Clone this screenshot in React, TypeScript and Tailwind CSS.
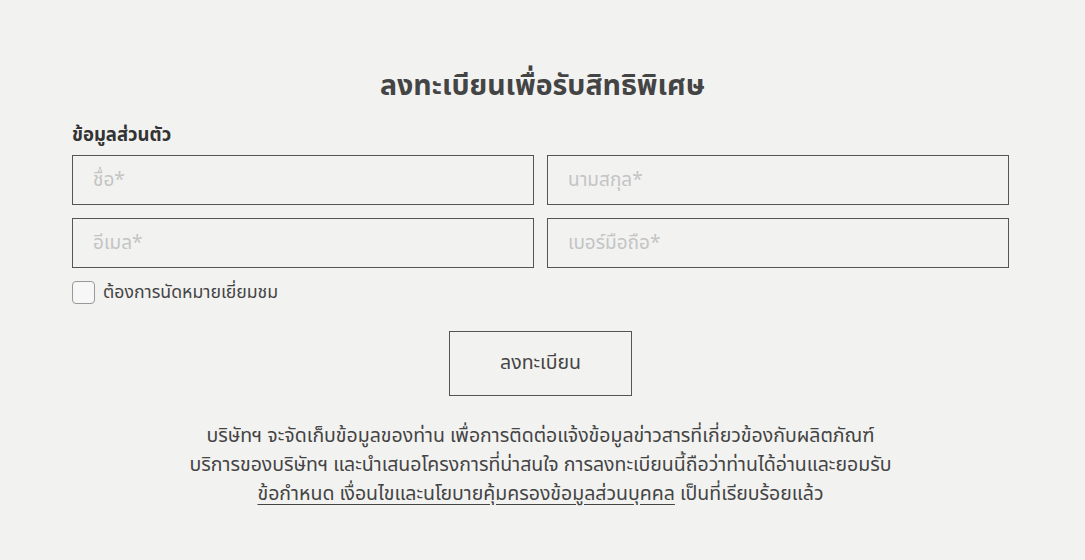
import { useState } from "react";

// ฟอร์มลงทะเบียนรับสิทธิพิเศษ
const FONT = "font-['Noto_Sans_Thai','Noto_Sans','Liberation_Sans',sans-serif]";

function Field({ placeholder }: { placeholder: string }) {
  return (
    <input
      type="text"
      placeholder={placeholder}
      className="h-[50px] w-full border border-[#555] bg-transparent px-5 text-[19px] text-[#333] outline-none placeholder:text-[#c4c4c4]"
    />
  );
}

export default function App() {
  const [nadHmai, setNadHmai] = useState(false);

  return (
    <div className={`${FONT} min-h-[560px] bg-[#f2f2f1] pt-[63px] text-[#444]`}>
      <h1 className="text-center text-[28.5px] font-bold leading-[48px] text-[#444]">
        ลงทะเบียนเพื่อรับสิทธิพิเศษ
      </h1>

      <div className="ml-[72px] mt-[12px] w-[937px]">
        <h2 className="text-[18.5px] font-bold leading-[24px] text-[#333]">ข้อมูลส่วนตัว</h2>

        <div className="mt-[8px] grid grid-cols-2 gap-x-[13px] gap-y-[13px]">
          <Field placeholder="ชื่อ*" />
          <Field placeholder="นามสกุล*" />
          <Field placeholder="อีเมล*" />
          <Field placeholder="เบอร์มือถือ*" />
        </div>

        <label className="mt-[13px] flex h-[23px] cursor-pointer items-center gap-[8px]">
          <input
            type="checkbox"
            checked={nadHmai}
            onChange={(e) => setNadHmai(e.target.checked)}
            className="h-[23px] w-[23px] appearance-none rounded-[4px] border border-[#999] bg-[#f7f7f7] checked:bg-[#555]"
          />
          <span className="text-[17.7px] leading-[23px] text-[#444]">ต้องการนัดหมายเยี่ยมชม</span>
        </label>

        <div className="mt-[27px] flex justify-center">
          <button
            type="button"
            className="h-[65px] w-[183px] border border-[#555] text-[19.5px] text-[#444]"
          >
            ลงทะเบียน
          </button>
        </div>

        <p className="mt-[26px] text-center text-[19.5px] leading-[29px] text-[#444]">
          บริษัทฯ จะจัดเก็บข้อมูลของท่าน เพื่อการติดต่อแจ้งข้อมูลข่าวสารที่เกี่ยวข้องกับผลิตภัณฑ์
          <br />
          บริการของบริษัทฯ และนำเสนอโครงการที่น่าสนใจ การลงทะเบียนนี้ถือว่าท่านได้อ่านและยอมรับ
          <br />
          <a href="#" className="underline underline-offset-4">
            ข้อกำหนด เงื่อนไขและนโยบายคุ้มครองข้อมูลส่วนบุคคล
          </a>{" "}
          เป็นที่เรียบร้อยแล้ว
        </p>
      </div>
    </div>
  );
}
